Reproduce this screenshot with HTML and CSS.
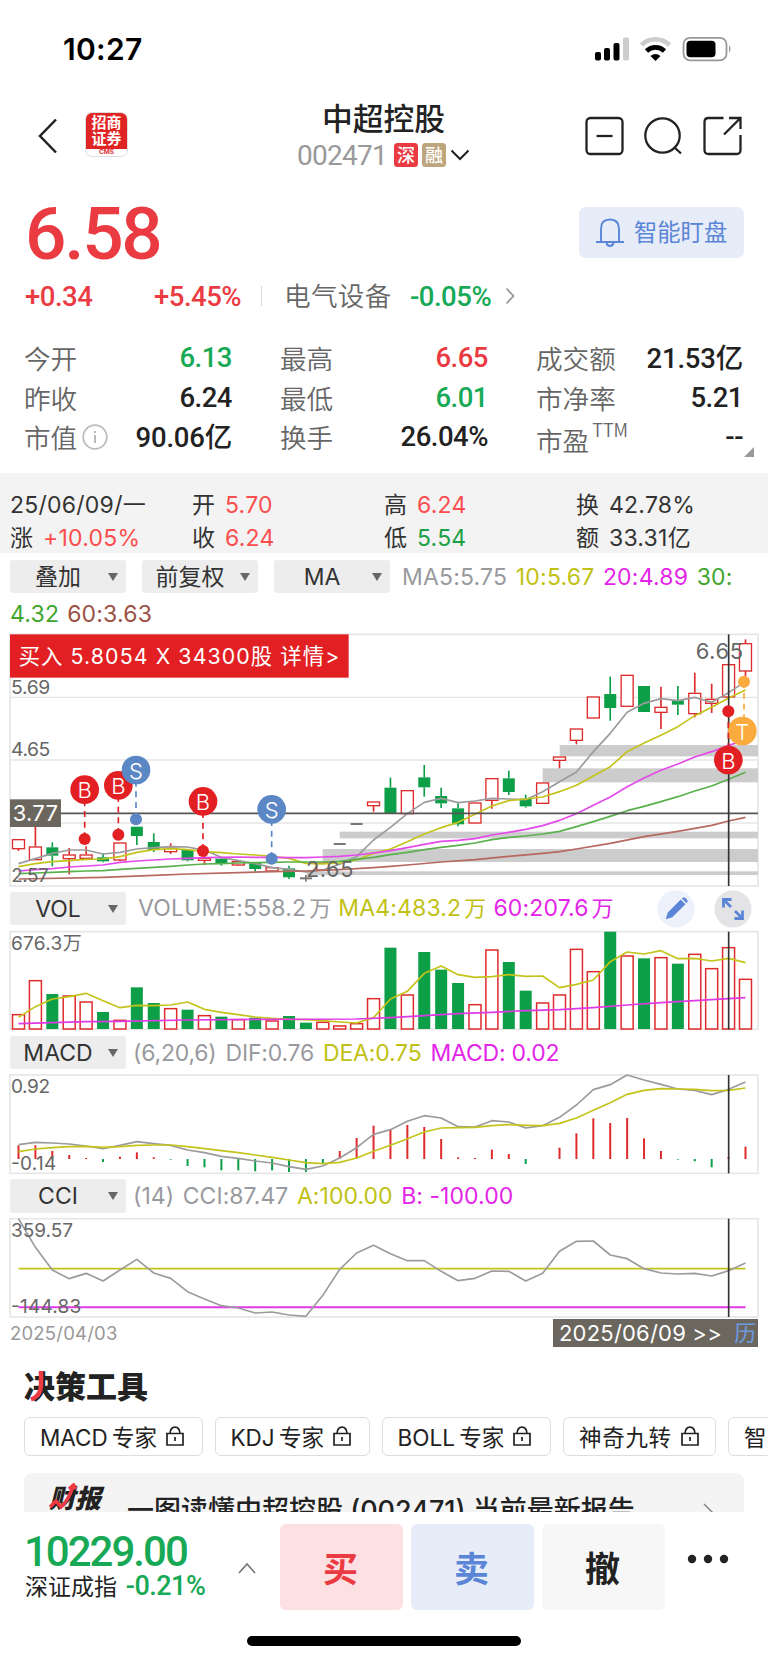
FILE: index.html
```html
<!DOCTYPE html>
<html lang="zh-CN">
<head>
<meta charset="utf-8">
<title>中超控股 002471</title>
<link rel="stylesheet" href="styles.css">
</head>
<body>
<div class="screen">
  <div class="status">
    <span class="clock">10:27</span>
    <svg class="status-icons" width="138" height="26" viewBox="594 36 138 26">
      <g fill="#000"><rect x="595" y="52" width="6" height="8.500" rx="2"/><rect x="604" y="48" width="6" height="12.500" rx="2"/><rect x="613.500" y="43" width="6" height="17.500" rx="2"/></g>
      <rect x="623" y="37.500" width="6" height="23" rx="2" fill="#ccc"/>
      <g fill="none" stroke-width="4.600"><path d="M641.500 45 A20 20 0 0 1 669.500 45" stroke="#ccc"/><path d="M646.500 51 A13 13 0 0 1 664.500 51" stroke="#000"/></g>
      <path d="M650.500 56 Q655.500 52 660.500 56 L655.500 61Z" fill="#000"/>
      <rect x="683.500" y="37.800" width="43" height="22.500" rx="6.500" fill="none" stroke="#999" stroke-width="1.800"/>
      <rect x="686.500" y="40.800" width="29" height="16.500" rx="4" fill="#000"/>
      <path d="M729 45 q3 4 0 8z" fill="#999"/>
    </svg>
  </div>

  <header class="header">
    <div class="head-side">
      <svg width="20" height="38" viewBox="0 0 20 38"><path d="M18 2.500 L2 19 L18 35.500" fill="none" stroke="#222" stroke-width="2.500"/></svg>
      <div class="logo"><div class="logo-top">招商<br>证券</div><div class="logo-cms">CMS</div></div>
    </div>
    <div class="head-title">
      <h1>中超控股</h1>
      <div class="code"><span class="code-num">002471</span><span class="badge">深</span><span class="badge tan">融</span>
        <svg width="20" height="12" viewBox="0 0 20 12"><path d="M1.500 1.500 L10 10 L18.500 1.500" fill="none" stroke="#222" stroke-width="2"/></svg></div>
    </div>
    <svg class="head-icons" width="158" height="42" viewBox="585 115 158 42" fill="none" stroke="#222" stroke-width="2.300">
      <rect x="586.500" y="118" width="36" height="36" rx="4"/><path d="M596.500 136 H612.500"/>
      <circle cx="662.500" cy="135.500" r="17.200"/><path d="M674 147 L681 153.500"/>
      <path d="M723.500 118 H708.500 Q704.500 118 704.500 122 V150 Q704.500 154 708.500 154 H736.500 Q740.500 154 740.500 150 V135"/><path d="M729 118 H740.500 V129 M740.500 118 L724 134.500"/>
    </svg>
  </header>

  <section class="quote">
    <div class="quote-main">
      <div class="price">6.58</div>
      <button class="watch"><svg width="28" height="30" viewBox="0 0 28 30" fill="none" stroke="#5b85d6" stroke-width="1.900"><path d="M5 24 V11 Q5 1.500 14 1.500 Q23 1.500 23 11 V24 M0 24 H28 M10.500 24.500 Q11 28 14 28 Q17 28 17.500 24.500"/></svg><span>智能盯盘</span></button>
    </div>
    <div class="change">
      <span class="num chg red">+0.34</span><span class="num pct red">+5.45%</span><i class="divider"></i>
      <span class="label">电气设备</span><span class="num sector green">-0.05%</span>
      <svg width="11" height="18" viewBox="0 0 11 18"><path d="M1.500 1.500 L8.500 9 L1.500 16.500" fill="none" stroke="#999" stroke-width="1.800"/></svg>
    </div>
    <div class="stats">
      <div class="stat"><span class="label">今开</span><b class="num green">6.13</b></div>
      <div class="stat"><span class="label">最高</span><b class="num red">6.65</b></div>
      <div class="stat"><span class="label">成交额</span><b class="num yi">21.53亿</b></div>
      <div class="stat"><span class="label">昨收</span><b class="num">6.24</b></div>
      <div class="stat"><span class="label">最低</span><b class="num green">6.01</b></div>
      <div class="stat"><span class="label">市净率</span><b class="num">5.21</b></div>
      <div class="stat"><span class="label cap">市值<svg width="26" height="26" viewBox="0 0 26 26" fill="none" stroke="#bbb"><circle cx="13" cy="13" r="11.800" stroke-width="1.700"/><path d="M13 11 V19 M13 7 V9" stroke-width="2"/></svg></span><b class="num yi">90.06亿</b></div>
      <div class="stat"><span class="label">换手</span><b class="num">26.04%</b></div>
      <div class="stat"><span class="label pe">市盈<sup>TTM</sup></span><b class="num">--</b></div>
    </div>
    <i class="corner"></i>
  </section>

  <section class="day">
    <span>25/06/09/一</span><span>开 <em class="rise">5.70</em></span><span>高 <em class="rise">6.24</em></span><span>换 <em>42.78%</em></span>
    <span>涨 <em class="rise">+10.05%</em></span><span>收 <em class="rise">6.24</em></span><span>低 <em class="fall">5.54</em></span><span>额 <em>33.31亿</em></span>
  </section>

  <section class="charts">
    <div class="bar first"><button class="select cjk"><span>叠加</span></button><button class="select cjk mid"><span>前复权</span></button><button class="select"><span>MA</span></button>
      <div class="legend ma"><span class="c-gray">MA5:5.75</span><span class="c-yellow">10:5.67</span><span class="c-pink">20:4.89</span><span class="c-green">30:</span></div></div>
    <div class="legend second"><span class="c-green">4.32</span><span class="c-brown">60:3.63</span></div>
    <svg id="kline" class="chart" width="768" height="260" viewBox="0 15 2304 780"></svg>
    <div class="bar bar-vol"><button class="select"><span>VOL</span></button>
      <div class="legend vol"><span class="c-gray">VOLUME:558.2<i>万</i></span><span class="c-yellow">MA4:483.2<i>万</i></span><span class="c-pink">60:207.6<i>万</i></span></div>
      <div class="tools">
        <svg width="38" height="38" viewBox="0 0 38 38"><circle cx="19" cy="19" r="18.600" fill="#ecf1fb"/><g transform="translate(19 19) rotate(45)" fill="#5b85d6"><path d="M-3.300 -10 H3.300 V8.500 L0 14.500 L-3.300 8.500Z"/><path d="M-3.300 -11.500 V-12 Q-3.300 -14.500 0 -14.500 Q3.300 -14.500 3.300 -12 V-11.500Z"/></g></svg>
        <svg width="38" height="38" viewBox="0 0 38 38"><circle cx="19" cy="19" r="18.600" fill="#e4e4e6"/><g fill="none" stroke="#5b85d6" stroke-width="2.800"><path d="M9.500 17.500 V9.500 H17.500 M9.500 9.500 L17 17"/><path d="M28.500 20.500 V28.500 H20.500 M28.500 28.500 L21 21"/></g></svg>
      </div></div>
    <svg id="volume" class="chart" width="768" height="102" viewBox="0 135 2304 306"></svg>
    <div class="bar bar-macd"><button class="select"><span>MACD</span></button>
      <div class="legend macd"><span class="c-gray">(6,20,6)</span><span class="c-gray">DIF:0.76</span><span class="c-yellow">DEA:0.75</span><span class="c-pink">MACD: 0.02</span></div></div>
    <svg id="macd" class="chart" width="768" height="102" viewBox="0 39 2304 306"></svg>
    <div class="bar"><button class="select"><span>CCI</span></button>
      <div class="legend cci"><span class="c-gray">(14)</span><span class="c-gray">CCI:87.47</span><span class="c-yellow">A:100.00</span><span class="c-pink">B: -100.00</span></div></div>
    <svg id="cci" class="chart" width="768" height="102" viewBox="0 471 2304 306"></svg>
    <div class="dates"><span>2025/04/03</span><span class="cursor-date">2025/06/09 &gt;&gt; <b>历</b></span></div>
  </section>

  <section class="decision">
    <h2>决策工具<svg class="h2-mark" width="16" height="31" viewBox="0 0 16 31"><path d="M11 0 V15 Q10.500 25 1 28.500" fill="none" stroke="#ee3a43" stroke-width="4.500"/></svg></h2>
    <div class="pills">
      <span class="pill p1">MACD 专家<svg class="lock" viewBox="0 0 18 20"><path d="M1 7.500 H17 V19 H1Z M4 7.500 Q4.500 1.200 9 1.200 Q13.500 1.200 14 7.500 M9 11 V15"/></svg></span>
      <span class="pill p2">KDJ 专家<svg class="lock" viewBox="0 0 18 20"><path d="M1 7.500 H17 V19 H1Z M4 7.500 Q4.500 1.200 9 1.200 Q13.500 1.200 14 7.500 M9 11 V15"/></svg></span>
      <span class="pill p3">BOLL 专家<svg class="lock" viewBox="0 0 18 20"><path d="M1 7.500 H17 V19 H1Z M4 7.500 Q4.500 1.200 9 1.200 Q13.500 1.200 14 7.500 M9 11 V15"/></svg></span>
      <span class="pill p4">神奇九转<svg class="lock" viewBox="0 0 18 20"><path d="M1 7.500 H17 V19 H1Z M4 7.500 Q4.500 1.200 9 1.200 Q13.500 1.200 14 7.500 M9 11 V15"/></svg></span>
      <span class="pill p5">智</span>
    </div>
    <div class="report"><div class="report-logo">财报<svg class="report-mark" width="30" height="28" viewBox="0 0 30 28"><path d="M1 24 L7 18 L12 24 Q20 17 24 3 M20 6 L24.500 2 L27 6" fill="none" stroke="#ee3a43" stroke-width="3.500"/></svg></div><span class="report-text">一图读懂中超控股 (002471) 当前最新报告</span>
      <svg class="report-go" width="12" height="22" viewBox="0 0 12 22"><path d="M1 1 L11 11 L1 21" fill="none" stroke="#888" stroke-width="1.500"/></svg></div>
  </section>

  <footer class="footer">
    <div class="trade">
      <div class="index"><div class="index-val">10229.00</div><div class="index-sub">深证成指 <b class="num green">-0.21%</b></div></div>
      <svg class="caret" width="18" height="12" viewBox="0 0 18 12"><path d="M1 11 L9 2 L17 11" fill="none" stroke="#777" stroke-width="1.700"/></svg>
      <button class="act buy">买</button><button class="act sell">卖</button><button class="act cancel">撤</button>
      <svg class="more" width="42" height="10" viewBox="0 0 42 10" fill="#222"><circle cx="5" cy="5" r="4.200"/><circle cx="21" cy="5" r="4.200"/><circle cx="37" cy="5" r="4.200"/></svg>
    </div>
    <div class="home"></div>
  </footer>
</div>
<script src="charts.js"></script>
</body>
</html>
```

FILE: styles.css
```css
* { box-sizing: border-box; }
body { margin: 0; background: #fff; color: #222; font-family: Inter, "Noto Sans CJK SC", sans-serif; }
button { border: 0; font: inherit; color: inherit; padding: 0; }
h1, h2 { margin: 0; }
b, em, i { font-weight: inherit; font-style: normal; }
svg { display: block; flex: none; }
.screen { width: 768px; height: 1663px; overflow: hidden; display: flex; flex-direction: column; }
.screen > * { flex: none; }

.status { height: 90px; padding: 30px 36px 0 63px; display: flex; justify-content: space-between; align-items: flex-start; }
.clock { font-size: 30px; line-height: 38px; font-weight: 600; color: #000; letter-spacing: .3px; }
.status-icons { margin-top: 6px; }

.header { height: 100px; padding: 0 25px 0 38px; display: grid; grid-template-columns: 190px 1fr 158px; }
.head-side { display: flex; padding-top: 22px; }
.head-side > svg { margin-top: 5px; }
.logo { width: 43px; height: 45px; margin-left: 27px; border-radius: 7px; background: #fff; border: 1px solid #ddd; overflow: hidden; text-align: center; }
.logo-top { margin: -1px -1px 0; height: 37px; padding-top: 2px; background: #e02424; color: #fff; font: 700 15px/16px "Noto Sans CJK SC", sans-serif; }
.logo-cms { color: #d33; font-size: 6.500px; line-height: 7px; font-weight: 700; }
.head-title { padding-top: 8px; text-align: center; padding-right: 46px; }
.head-title h1 { font: 500 30.800px/38px "Noto Sans CJK SC", sans-serif; }
.code { display: flex; align-items: center; justify-content: center; height: 38px; }
.code-num { font: 400 28px/37px Roboto, sans-serif; color: #999; letter-spacing: -.7px; margin-right: 7px; }
.badge { width: 24px; height: 24px; border-radius: 3.500px; background: #eb3b42; color: #fff; font: 500 18px/23px "Noto Sans CJK SC", sans-serif; text-align: center; margin-right: 4px; }
.badge.tan { background: #bda57e; }
.head-icons { margin-top: 25px; }

.quote { height: 283px; padding: 17px 24px 0 25px; position: relative; font-family: Roboto, "Noto Sans CJK SC", sans-serif; }
.quote-main { display: flex; justify-content: space-between; height: 63px; }
.price { font-size: 73px; line-height: 54px; font-weight: 500; color: #eb3b42; letter-spacing: -2.300px; }
.watch { width: 165px; height: 51px; border-radius: 7px; background: #e6ecf8; color: #5b85d6; display: flex; align-items: center; padding-left: 17px; gap: 10px; font-size: 23.300px; }
.watch span { padding-bottom: 3px; }
.red { color: #eb3b42; } .green { color: #18a957; }
.label { color: #666; font: 350 26.600px/39px "Noto Sans CJK SC", sans-serif; margin-left: -1px; }
.num { font-weight: 500; font-size: 27.500px; letter-spacing: -.5px; }
.num.yi { padding-bottom: 3px; letter-spacing: -.2px; }
.change { display: flex; align-items: center; height: 52px; }
.change .label { margin-left: 22px; width: 126px; padding-bottom: 3px; letter-spacing: .3px; }
.chg { width: 129px; } .pct { width: 107px; } .sector { width: 95px; }
.divider { width: 1px; height: 20px; background: #ddd; }
.stats { margin-top: 16px; display: grid; grid-template-columns: 207px 207px 206px; column-gap: 49px; grid-auto-rows: 39.500px; }
.stat { display: flex; justify-content: space-between; align-items: center; white-space: nowrap; }
.cap { display: flex; align-items: center; gap: 5px; }
.pe { padding-top: 5px; }
.pe sup { font-size: 18px; line-height: 0; vertical-align: 14px; margin-left: 3px; }
.corner { position: absolute; right: 14px; bottom: 16px; border-left: 10px solid transparent; border-bottom: 10px solid #999; }

.day { height: 80px; background: #f3f3f3; padding: 16px 0 0 10px; display: grid; grid-template-columns: 182px 192px 192px 1fr; grid-auto-rows: 32.500px; align-items: center; font-size: 23px; line-height: 32px; letter-spacing: .25px; color: #333; white-space: nowrap; }
.day em { margin-left: 3px; }
.rise { color: #fb4e4e; } .fall { color: #1ba046; }

.bar { height: 42px; padding-left: 10px; display: flex; align-items: center; }
.bar.first { height: 47px; }
.bar.bar-vol { height: 40px; padding-bottom: 3px; }
.bar.bar-macd { height: 41px; }
.select { width: 116px; height: 33.500px; border-radius: 3px; background: #ededed; display: flex; align-items: center; justify-content: space-between; padding-right: 8px; font-size: 23px; color: #333; flex: none; }
.select span { flex: 1; text-align: center; padding-right: 2px; }
.select.cjk span { padding-bottom: 3px; }
.select::after { content: ""; border: 5px solid transparent; border-top: 8px solid #666; border-bottom: 0; }
.select.mid { margin: 0 16px; }
.legend { display: flex; font-size: 23px; white-space: nowrap; }
.legend.ma { margin-left: 12px; gap: 8.500px; letter-spacing: .2px; }
.legend.second { height: 30px; line-height: 28px; padding-left: 10px; gap: 8px; letter-spacing: .2px; }
.legend.vol { margin-left: 12px; gap: 7px; letter-spacing: .15px; line-height: 26px; margin-top: -2px; }
.legend.vol i { margin-left: 3px; font-size: 22px; }
.legend.macd { margin-left: 7px; gap: 9px; letter-spacing: -.2px; }
.legend.cci { margin-left: 7px; gap: 8.500px; letter-spacing: .05px; }
.c-gray { color: #999a9e; } .c-yellow { color: #c1c115; } .c-pink { color: #e325e8; } .c-green { color: #40a52e; } .c-brown { color: #9c5245; }
.tools { display: flex; margin-left: auto; gap: 19px; padding-right: 16px; }
.chart text { font-family: Inter, "Noto Sans CJK SC", sans-serif; }
.dates { height: 28px; display: flex; justify-content: space-between; align-items: center; padding: 0 10px 0 10px; color: #999; font-size: 18.500px; letter-spacing: .2px; }
.cursor-date { width: 205px; height: 28px; background: #6b675e; color: #fff; font-size: 22px; line-height: 28px; padding-left: 6px; white-space: nowrap; }
.cursor-date b { color: #6d9be2; margin-left: 6px; }

.decision { height: 165px; padding: 17px 0 0 24px; overflow: hidden; }
h2 { position: relative; font: 900 31px/42px "Noto Sans CJK SC", sans-serif; height: 53px; }
.h2-mark { position: absolute; left: 6px; top: 7px; }
.pills { display: flex; gap: 12px; height: 56px; }
.pill { flex: none; height: 39px; border: 1.500px solid #ddd; border-radius: 6px; display: flex; align-items: center; padding: 0 0 1px 15px; gap: 9px; font-size: 22.500px; white-space: nowrap; word-spacing: -2px; }
.p1 { width: 178.500px; } .p2 { width: 155px; } .p3 { width: 169.500px; } .p4 { width: 153px; letter-spacing: .7px; } .p5 { width: 120px; }
.lock { width: 18px; height: 20px; fill: none; stroke: #222; stroke-width: 1.700; }
.report { width: 720px; height: 80px; background: #f4f4f4; border-radius: 8px; display: flex; padding-left: 25px; }
.report-logo { position: relative; font: italic 900 26px/48px "Noto Sans CJK SC", sans-serif; width: 78px; height: 48px; }
.report-mark { position: absolute; left: 0; top: 10px; }
.report-text { font: 500 27px/40px Inter, "Noto Sans CJK SC", sans-serif; padding-top: 18px; width: 576px; white-space: nowrap; }
.report-go { margin-top: 30px; }

.footer { height: 151px; background: #fff; }
.trade { display: flex; padding: 12px 0 0 25px; height: 124px; }
.index { width: 213px; }
.index-val { font: 500 42px/48px Roboto, sans-serif; color: #18a957; letter-spacing: -2px; margin: 4px 0 0 -1px; }
.index-sub { font: 400 23px/34px Roboto, "Noto Sans CJK SC", sans-serif; margin-top: -7px; white-space: nowrap; }
.index-sub .num { margin-left: 3px; font-size: 27px; font-weight: 500; }
.caret { margin: 38px 24px 0 0; }
.act { width: 123px; height: 86px; border-radius: 6px; margin-right: 8px; font: 600 35px/80px "Noto Sans CJK SC", sans-serif; padding-right: 2px; }
.buy { background: #fde0e2; color: #eb3b42; } .sell { background: #e6ecf8; color: #5b85d6; } .cancel { background: #f7f7f7; }
.more { margin: 30px 0 0 14px; }
.home { width: 274px; height: 10px; border-radius: 5px; background: #000; margin-left: 247px; }
```

FILE: charts.js
```js
const RED = '#de2b2b', GREEN = '#0d9e48', GRAY = '#9b9b9d', YELLOW = '#c3c41b', PINK = '#e03ae6';
const X = i => 55.5 + 50.72 * i;
const rect = (x, y, w, h, a) => `<rect x="${x}" y="${y}" width="${w}" height="${h}" ${a}/>`;
const line = (x1, y1, x2, y2, c, w = 5, e = '') => `<path d="M${x1} ${y1}L${x2} ${y2}" stroke="${c}" stroke-width="${w}" ${e}/>`;
const curve = (ys, c, w = 5) => `<polyline points="${ys.map((y, i) => y == null ? '' : X(i) + ',' + y).join(' ')}" fill="none" stroke="${c}" stroke-width="${w}" stroke-linejoin="round"/>`;
const sparse = pairs => { const out = []; pairs.forEach(([i, y]) => out[i] = y); return Array.from(out); };
const text = (x, y, size, len, s, c = '#666') => `<text x="${x}" y="${y}" font-size="${size}" textLength="${len}" fill="${c}">${s}</text>`;
const frame = (y1, y2) => rect(30, y1, 2244, y2 - y1, 'fill="none" stroke="#e6e6e6" stroke-width="5"');
const cursor = (y1, y2) => line(2186, y1, 2186, y2, '#333', 5);
const put = (id, s) => { document.getElementById(id).innerHTML = s; };

// Candles: colour, high, body top, body bottom, low
const candles = [
['r',642,642,671,678],['r',575,664,704,704],['g',652,667,692,724],['r',669,688,701,748],['r',664,688,700,704],['g',685,697,709,712],
['r',652,652,705,708],['g',605,605,633,660],['g',625,651,675,681],['r',655,668,680,687],['g',675,675,706,709],['r',690,698,706,720],
['g',696,701,717,722],['r',706,708,720,722],['g',712,712,732,740],['r',725,726,738,742],['g',722,730,757,762],['n',750,760,760,770],
['r',712,712,735,735],['n',657,657,657,657],['n',597,597,597,597],['r',529,529,542,560],['g',458,488,565,565],['r',495,495,566,566],
['g',420,457,487,515],['g',488,513,535,549],['g',535,550,598,604],['r',532,532,594,594],['r',459,459,526,551],['g',437,460,501,510],
['g',509,521,544,548],['r',472,472,535,535],['r',394,394,406,430],['r',310,310,346,358],['r',214,214,279,279],['g',155,207,249,287],
['r',149,149,244,244],['g',183,183,261,261],['r',185,245,262,312],['g',183,226,239,270],['r',143,203,266,277],['r',176,221,235,264],
['r',117,117,216,216],['r',43,54,138,153]];
let k = frame(28, 783);
[217, 405, 594].forEach(y => k += line(30, y, 2274, y, '#e6e6e6', 4));
[[1679,360,34],[1628,430,42],[1019,620,20],[968,672,39],[920,739,11]].forEach(([x, y, h]) => k += rect(x, y, 2274 - x, h, 'fill="#ccc"'));
candles.forEach(([t, hi, top, bot, lo], i) => {
  const x = X(i);
  if (t === 'n') { k += line(x - 18, top, x + 18, top, '#777', 6); if (lo > hi) k += line(x, hi, x, lo, '#777', 5); return; }
  const c = t === 'r' ? RED : GREEN;
  if (hi < top) k += line(x, hi, x, top, c);
  if (lo > bot) k += line(x, bot, x, lo, c);
  k += t === 'r' ? rect(x - 18, top + 2, 36, Math.max(bot - top - 2, 4), `fill="#fff" stroke="${c}" stroke-width="4"`) : rect(x - 18, top, 36, bot - top, `fill="${c}"`);
});
k += curve([716,701,685,675,675,687,682,672,668,665,666,676,697,707,716,728,733,741,735,718,695,645,607,566,532,520,533,528,520,522,524,500,470,441,380,325,262,235,221,227,217,232,203,170], GRAY);
k += curve([725,716,710,707,703,702,695,682,674,671,674,680,683,687,690,694,700,715,717,714,705,685,672,650,627,608,592,568,543,527,522,516,500,481,453,425,380,354,331,305,272,247,219,195], YELLOW);
k += curve([738,734,731,726,723,720,712,708,705,702,700,698,697,696,697,697,698,698,696,694,690,684,677,668,658,649,646,641,630,622,613,602,586,566,541,516,485,459,436,417,396,380,361,345], '#e44aea', 5);
k += curve([746,744,742,740,738,737,733,730,727,724,720,717,716,714,713,712,711,711,711,709,703,697,689,682,674,667,661,654,644,637,633,627,619,605,590,574,557,544,530,515,498,483,463,442], '#5bb04e');
k += curve(sparse([[0,762],[5,757],[8,751],[10,747],[13,743],[15,740],[17,738],[19,734],[21,728],[22,724],[23,720],[25,711],[27,704],[29,694],[31,685],[32,680],[33,672],[35,655],[37,635],[39,619],[41,601],[42,588],[43,577]]), '#b5695f');
k += line(30, 565, 2274, 565, '#555', 5) + cursor(28, 783);
k += text(33, 206, 58, 118, '5.69') + text(33, 394, 58, 118, '4.65') + text(34, 771, 57, 112, '2.57');
k += text(918, 755, 65, 142, '2.65') + text(2087, 101, 66, 142, '6.65');
k += rect(30, 523, 153, 83, 'fill="#6b675e"') + text(38, 588, 66, 136, '3.77', '#fff');
k += rect(30, 28, 1016, 130, 'fill="#e22023"') + text(56, 118, 64, 962, '买入 5.8054 X 34300股 详情&gt;', '#fff');
[['B',254,494,254,642],['B',355,481,355,629],['S',408,435,408,583],['B',609,529,609,678],['S',815,553,815,701],['T',2227,318,2232,170],['B',2185,405,2185,259]].forEach(([s, x, y, dx, dy]) => {
  const c = { B: '#e22023', S: '#5c87c5', T: '#fbaa3d' }[s];
  k += line(dx, y, dx, dy, c, 5, 'stroke-dasharray="18 14"') + `<circle cx="${dx}" cy="${dy}" r="18" fill="${c}"/><circle cx="${x}" cy="${y}" r="43" fill="${c}"/><text x="${x}" y="${y + 26}" font-size="66" font-weight="300" fill="#fff" text-anchor="middle">${s}</text>`;
});
put('kline', k);

const tops = [388,286,-327,332,350,-381,405,-307,-354,370,-374,391,-395,403,-398,407,-393,-413,411,422,415,340,-188,329,-201,-254,-294,358,194,-231,-317,353,329,192,259,-140,212,-220,217,-236,207,250,187,282];
let v = frame(140, 433);
tops.forEach((t, i) => v += t > 0 ? rect(X(i) - 18, t + 1, 36, 431 - t, `fill="#fff" stroke="${RED}" stroke-width="4.5"`) : rect(X(i) - 18, -t, 36, 432 + t, `fill="${GREEN}"`));
v += curve([397,365,342,335,325,347,368,361,362,360,351,373,382,389,396,400,403,404,407,411,414,398,342,319,265,243,269,277,275,269,274,273,308,298,285,230,201,207,197,221,220,228,220,233], YELLOW);
v += curve(sparse([[0,416],[4,410],[6,409],[10,405],[14,403],[20,402],[22,398],[24,392],[26,386],[28,382],[30,377],[32,374],[34,368],[36,360],[38,353],[40,347],[42,341],[43,338]]), PINK, 5);
put('volume', v + cursor(140, 433) + text(33, 195, 57, 212, '676.3万'));

const hist = [256,256,273,285,294,306,290,277,292,299,318,322,331,331,334,331,336,336,311,273,234,197,207,195,201,237,292,294,269,282,312,297,263,220,175,189,174,235,273,299,304,322,291,260];
let m = frame(45, 340);
hist.forEach((y, i) => m += line(X(i), 297, X(i), y, y < 297 ? RED : GREEN, 6));
m += curve([254,247,249,252,258,266,256,245,251,256,270,278,289,295,303,309,320,328,318,294,263,223,209,184,167,174,200,201,182,186,204,197,172,135,89,74,45,60,73,87,91,104,88,66], GRAY, 5);
m += curve([275,267,263,260,259,262,260,256,255,255,260,266,272,278,285,292,300,308,311,307,294,274,256,236,216,204,203,202,197,194,196,197,190,174,151,128,103,91,86,87,88,92,91,84], YELLOW, 5);
put('macd', m + cursor(45, 340) + text(33, 100, 57, 117, '0.92') + text(33, 329, 57, 136, '-0.14'));

let c = frame(476, 771) + line(X(0), 626, X(43), 626, YELLOW) + line(X(0), 742, X(43), 742, PINK, 6);
c += curve([476,562,630,656,640,663,630,598,639,655,695,717,737,744,759,756,765,769,706,628,579,556,581,602,602,634,662,655,633,634,663,640,574,544,543,585,596,626,639,642,640,648,632,609], GRAY);
put('cci', c + cursor(476, 771) + text(33, 532, 57, 186, '359.57') + text(33, 760, 57, 211, '-144.83'));
```
